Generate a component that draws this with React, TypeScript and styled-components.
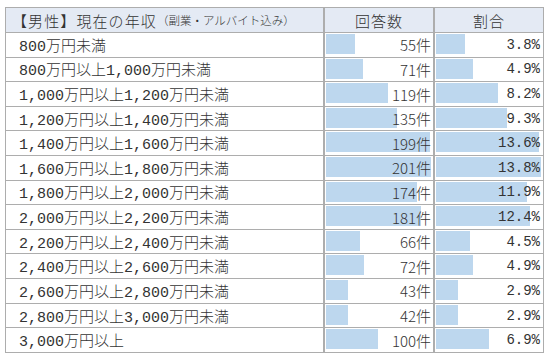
import * as React from 'react'
import styled, { createGlobalStyle } from 'styled-components'

const GlobalStyle = createGlobalStyle`
  body {
    margin: 0;
    background: #fff;
    color: #333;
    font-family: "Noto Sans CJK JP", sans-serif;
  }
`

const rows: [string, number, number][] = [
  ['800万円未満', 55, 3.8],
  ['800万円以上1,000万円未満', 71, 4.9],
  ['1,000万円以上1,200万円未満', 119, 8.2],
  ['1,200万円以上1,400万円未満', 135, 9.3],
  ['1,400万円以上1,600万円未満', 199, 13.6],
  ['1,600万円以上1,800万円未満', 201, 13.8],
  ['1,800万円以上2,000万円未満', 174, 11.9],
  ['2,000万円以上2,200万円未満', 181, 12.4],
  ['2,200万円以上2,400万円未満', 66, 4.5],
  ['2,400万円以上2,600万円未満', 72, 4.9],
  ['2,600万円以上2,800万円未満', 43, 2.9],
  ['2,800万円以上3,000万円未満', 42, 2.9],
  ['3,000万円以上', 100, 6.9]
]

const BAR_MAX = 105
const maxCount = Math.max(...rows.map(r => r[1]))
const maxRate = Math.max(...rows.map(r => r[2]))

const LINE = '#adadad'

const Page = styled.div`
  padding: 7px 0 0 5px;
`

const Sheet = styled.div`
  display: grid;
  grid-template-columns: 319px 110px 109px;
  grid-template-rows: 25px;
  grid-auto-rows: 24.615px;
  width: max-content;
  border-top: 1px solid ${LINE};
  border-left: 1px solid ${LINE};
`

const Cell = styled.div<{ $last?: boolean }>`
  box-sizing: border-box;
  border-bottom: 1px solid ${LINE};
  border-right: ${p => (p.$last ? 1 : 2)}px solid ${LINE};
  min-width: 0;
  overflow: hidden;
  font-weight: 300;
`

const HeaderCell = styled(Cell)<{ $center?: boolean }>`
  background: #e4eaf4;
  display: flex;
  align-items: center;
  justify-content: ${p => (p.$center ? 'center' : 'flex-start')};
  padding-left: ${p => (p.$center ? 0 : 6)}px;
  font-size: 15px;
  letter-spacing: ${p => (p.$center ? 1 : 1.1)}px;
  white-space: nowrap;
`

const Note = styled.span`
  font-size: 11.5px;
  letter-spacing: 0;
`

const LabelCell = styled(Cell)`
  display: flex;
  align-items: center;
  padding-left: 13px;
  font-family: "Liberation Mono", "Noto Sans CJK JP", monospace;
  font-size: 15px;
  white-space: nowrap;
`

const BarCell = styled(Cell)`
  display: grid;
  padding: 1px 1px 0;
`

const Bar = styled.div`
  grid-area: 1 / 1;
  align-self: start;
  height: 20px;
  background: #bdd7ee;
`

const Value = styled.span<{ $mono?: boolean }>`
  grid-area: 1 / 1;
  justify-self: end;
  align-self: center;
  margin-top: -1px;
  padding-right: ${p => (p.$mono ? 2 : 1)}px;
  font-family: ${p =>
    p.$mono
      ? '"Liberation Mono", "Noto Sans CJK JP", monospace'
      : '"Noto Sans CJK JP", sans-serif'};
  font-size: ${p => (p.$mono ? 14 : 15)}px;
  line-height: 1;
  white-space: nowrap;
  position: relative;
`

export default function App() {
  return (
    <Page>
      <GlobalStyle />
      <Sheet>
        <HeaderCell>
          【男性】現在の年収<Note>（副業・アルバイト込み）</Note>
        </HeaderCell>
        <HeaderCell $center>回答数</HeaderCell>
        <HeaderCell $center $last>割合</HeaderCell>
        {rows.map(([label, count, rate]) => (
          <React.Fragment key={label}>
            <LabelCell>{label}</LabelCell>
            <BarCell>
              <Bar style={{ width: Math.round((count / maxCount) * BAR_MAX) }} />
              <Value>{count}件</Value>
            </BarCell>
            <BarCell $last>
              <Bar style={{ width: Math.round((rate / maxRate) * BAR_MAX) }} />
              <Value $mono>{rate.toFixed(1)}%</Value>
            </BarCell>
          </React.Fragment>
        ))}
      </Sheet>
    </Page>
  )
}
